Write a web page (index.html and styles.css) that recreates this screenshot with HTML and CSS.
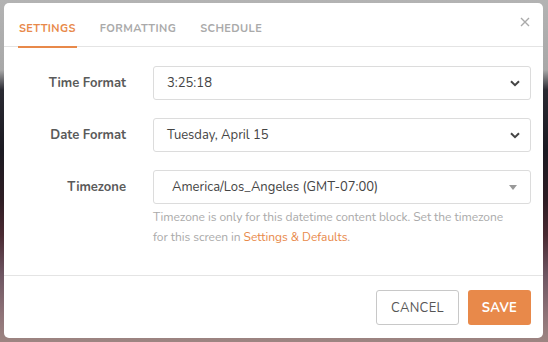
FILE: index.html
```html
<html>
   <head>
      <title>Datetime settings</title>
      <meta name="viewport" content="initial-scale=1, maximum-scale=1">
      <link rel="stylesheet" href="styles.css">
   </head>
   <body>
      <div class="backdrop">
         <div class="modal">
            <header class="modal-head">
               <nav class="tabs">
                  <span class="tab active">Settings</span>
                  <span class="tab">Formatting</span>
                  <span class="tab">Schedule</span>
               </nav>
               <button class="close" aria-label="Close">
                  <svg width="10" height="10" viewBox="0 0 10 10">
                     <path d="M1 1L9 9M9 1L1 9" stroke="#aaa" stroke-width="1.4" fill="none"></path>
                  </svg>
               </button>
            </header>
            <div class="modal-body">
               <div class="row">
                  <label class="label">Time Format</label>
                  <div class="select">
                     <span class="value">3:25:18</span>
                     <svg class="chevron" width="10" height="7" viewBox="0 0 10 7">
                        <path d="M1 1.2L5 5.2L9 1.2" stroke="#444" stroke-width="2" fill="none"></path>
                     </svg>
                  </div>
               </div>
               <div class="row">
                  <label class="label">Date Format</label>
                  <div class="select">
                     <span class="value">Tuesday, April 15</span>
                     <svg class="chevron" width="10" height="7" viewBox="0 0 10 7">
                        <path d="M1 1.2L5 5.2L9 1.2" stroke="#444" stroke-width="2" fill="none"></path>
                     </svg>
                  </div>
               </div>
               <div class="row">
                  <label class="label">Timezone</label>
                  <div class="field">
                     <div class="select combo">
                        <span class="value">America/Los_Angeles (GMT-07:00)</span>
                        <svg class="caret" width="8" height="5" viewBox="0 0 8 5">
                           <path d="M0 0H8L4 5Z" fill="#999"></path>
                        </svg>
                     </div>
                     <p class="help">Timezone is only for this datetime content block. Set the timezone for this screen in <a href="#">Settings &amp; Defaults</a>.</p>
                  </div>
               </div>
            </div>
            <footer class="modal-foot">
               <button class="btn cancel">Cancel</button>
               <button class="btn save">Save</button>
            </footer>
         </div>
      </div>
   </body>
</html>
```

FILE: styles.css
```css
*{
   font-family: 'Nunito', 'Lato', sans-serif;
   box-sizing: border-box;
}
body{
    margin: 0;
}
.backdrop{
    width: 548px;
    height: 342px;
    padding: 3px 5px 4px 4px;
    background: linear-gradient(180deg, #b3b3b3 0px, #a8a8a8 70px, #2a2a32 90px, #1b1a22 150px, #2e1d24 200px, #4a2a32 235px, #6e5662 275px, #8f7378 315px, #9d8582 342px);
}
.modal{
    height: 100%;
    background: #fff;
    border-radius: 5px;
    display: flex;
    flex-direction: column;
}
.modal-head{
    display: flex;
    align-items: flex-start;
    justify-content: space-between;
    border-bottom: 1px solid #e4e4e4;
    height: 44px;
}
.tabs{
    display: flex;
    gap: 22px;
    padding-left: 14px;
}
.tab{
    font-size: 11px;
    font-weight: 700;
    letter-spacing: 0.4px;
    text-transform: uppercase;
    color: #aaa;
    padding: 18px 1px 10px;
    border-bottom: 2px solid transparent;
}
.tab.active{
    color: #e8894a;
    border-bottom-color: #e8894a;
}
.close{
    border: 0;
    background: none;
    padding: 0;
    margin: 12px 11px 0 0;
    width: 14px;
    height: 14px;
    display: flex;
    align-items: center;
    justify-content: center;
}
.modal-body{
    flex: 1;
    padding: 19px 12px 0 13px;
    display: flex;
    flex-direction: column;
    gap: 18px;
    border-bottom: 1px solid #e4e4e4;
}
.row{
    display: grid;
    grid-template-columns: 109px 1fr;
    column-gap: 27px;
    align-items: start;
}
.label{
    text-align: right;
    font-size: 13px;
    font-weight: 700;
    color: #5a5a5a;
    line-height: 34px;
}
.select{
    height: 34px;
    border: 1px solid #dcdcdc;
    border-radius: 3px;
    display: flex;
    align-items: center;
    padding: 0 10px 0 13px;
    font-size: 13px;
    color: #444;
}
.value{
    flex: 1;
}
.combo{
    padding-left: 18px;
    padding-right: 13px;
}
.help{
    margin: 3px 0 0;
    padding-right: 22px;
    font-size: 12px;
    letter-spacing: -0.05px;
    line-height: 20px;
    color: #aaa;
}
.help a{
    color: #e8894a;
    text-decoration: none;
}
.modal-foot{
    display: flex;
    justify-content: flex-end;
    gap: 9px;
    padding: 14px 12px 13px;
}
.btn{
    height: 35px;
    border-radius: 3px;
    font-size: 13px;
    text-transform: uppercase;
    letter-spacing: 0.3px;
    cursor: pointer;
}
.cancel{
    width: 83px;
    background: #fff;
    border: 1px solid #c8c8c8;
    color: #555;
}
.save{
    width: 63px;
    background: #e8894a;
    border: 0;
    color: #fff;
    font-weight: 700;
}
```
